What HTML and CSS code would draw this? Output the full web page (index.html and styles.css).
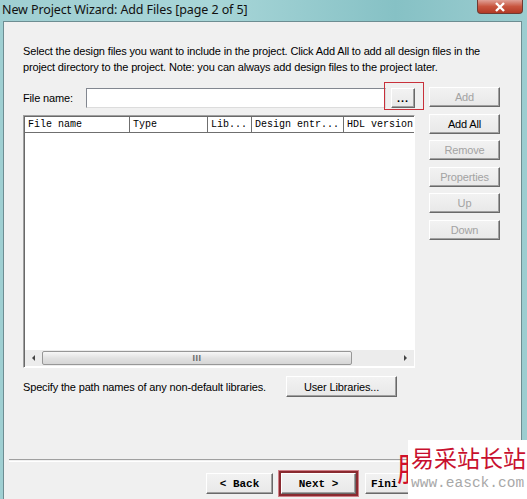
FILE: index.html
```html
<!DOCTYPE html>
<html lang="en">
<head>
<meta charset="UTF-8">
<title>New Project Wizard</title>
<link rel="stylesheet" href="styles.css">
</head>
<body>
<div class="window">
  <div class="titlebar">
    <span class="title">New Project Wizard: Add Files [page 2 of 5]</span>
    <span class="close-btn">
      <svg width="12" height="10" viewBox="0 0 12 10"><path d="M2 1 L10 9 M10 1 L2 9" stroke="#fff" stroke-width="2.4"/></svg>
    </span>
  </div>

  <div class="client">
    <p class="intro">Select the design files you want to include in the project. Click Add All to add all design files in the<br>project directory to the project. Note: you can always add design files to the project later.</p>

    <div class="main">
      <div class="left-column">
        <div class="file-row">
          <label class="file-label">File name:</label>
          <div class="file-input"></div>
          <div class="browse-wrap"><button class="btn browse">...</button></div>
        </div>

        <div class="list">
          <div class="list-head">
            <div class="col col-name">File name</div>
            <div class="col col-type">Type</div>
            <div class="col col-lib">Lib...</div>
            <div class="col col-entry">Design entr...</div>
            <div class="col col-hdl">HDL version</div>
          </div>
          <div class="list-body"></div>
          <div class="hscroll">
            <div class="arrow arrow-left"></div>
            <div class="thumb"><span class="grip">III</span></div>
            <div class="track"></div>
            <div class="arrow arrow-right"></div>
          </div>
        </div>
      </div>

      <div class="side-buttons">
        <button class="btn side disabled">Add</button>
        <button class="btn side">Add All</button>
        <button class="btn side disabled">Remove</button>
        <button class="btn side disabled">Properties</button>
        <button class="btn side disabled">Up</button>
        <button class="btn side disabled">Down</button>
      </div>
    </div>

    <div class="libs-row">
      <span class="libs-text">Specify the path names of any non-default libraries.</span>
      <button class="btn libs-btn">User Libraries...</button>
    </div>

    <div class="separator"></div>

    <div class="nav">
      <button class="btn nav-btn back">&lt; Back</button>
      <div class="next-wrap"><button class="btn nav-btn next">Next &gt;</button></div>
      <button class="btn nav-btn finish">Fini</button>
    </div>
  </div>

  <div class="watermark">
    <span class="wm-cut">腸</span>
    <div class="wm-box">
      <div class="wm-cn">易采站长站</div>
      <div class="wm-url">www.easck.com</div>
    </div>
  </div>
</div>
</body>
</html>
```

FILE: styles.css
```css
body, html {
  margin: 0;
  padding: 0;
  background: #fff;
}
.window {
  position: relative;
  width: 527px;
  height: 499px;
  overflow: hidden;
  background: linear-gradient(to right, #9fcfd2, #a8d6d8 40%, #86c1c5 75%, #9ccdd0);
  font-family: "Liberation Sans", Arial, sans-serif;
  font-size: 11px;
  color: #000;
}
.titlebar {
  height: 21px;
  display: flex;
  justify-content: space-between;
  align-items: flex-start;
}
.title {
  font-family: "Noto Sans", "Liberation Sans", sans-serif;
  font-size: 12.5px;
  line-height: 20px;
  padding-left: 2px;
  color: #111;
  letter-spacing: -0.1px;
}
.close-btn {
  width: 44px;
  height: 13px;
  margin-right: 4px;
  border: 1px solid #6e3a32;
  border-top: none;
  border-radius: 0 0 4px 4px;
  background: linear-gradient(#e0a096, #c8553f 50%, #b33a25);
  display: flex;
  align-items: center;
  justify-content: center;
}
.client {
  position: relative;
  margin-left: 3px;
  margin-right: 5px;
  height: 478px;
  background: #f0f0f0;
  border: 1px solid #6d8d92;
  border-bottom: none;
  letter-spacing: -0.15px;
}
.intro {
  margin: 0;
  padding: 21px 0 0 19px;
  line-height: 16px;
  white-space: nowrap;
}

/* file list + side buttons */
.main {
  display: flex;
  margin-top: 12px;
  margin-left: 19px;
}
.left-column {
  width: 392px;
}
.file-row {
  display: flex;
  align-items: center;
  height: 21px;
}
.file-label {
  width: 63px;
}
.file-input {
  width: 299px;
  height: 18px;
  margin-top: 1px;
  background: #fff;
  border: 1px solid;
  border-color: #828790 #dcdcdc #dcdcdc #828790;
}
.browse-wrap {
  position: relative;
  margin-left: 5px;
  margin-top: 1px;
}
.browse-wrap::after {
  content: "";
  position: absolute;
  left: -7px;
  top: -6px;
  width: 38px;
  height: 26px;
  border: 1px solid #c8303a;
}
.btn {
  font-family: "Liberation Sans", Arial, sans-serif;
  font-size: 11px;
  letter-spacing: -0.15px;
  color: #000;
  background: linear-gradient(#f2f2f2, #e8e8e8);
  border: 1px solid;
  border-color: #fff #696969 #696969 #fff;
  box-shadow: inset -1px -1px #a0a0a0;
  padding: 0;
  height: 20px;
}
.btn.disabled {
  color: #a3a3a3;
}
.browse {
  width: 24px;
  font-weight: bold;
  letter-spacing: 1px;
  line-height: 12px;
}
.list {
  margin-top: 7px;
  height: 250px;
  border: 1px solid;
  border-color: #a0a0a0 #fff #fff #a0a0a0;
  box-shadow: inset 1px 1px #696969;
  background: #fff;
  display: flex;
  flex-direction: column;
  padding: 1px 0 0 1px;
  letter-spacing: 0;
}
.list-head {
  display: flex;
  height: 15px;
  font-family: "Liberation Mono", "Courier New", monospace;
  font-size: 10px;
  line-height: 15px;
  border-bottom: 1px solid #6f6f6f;
}
.col {
  border-right: 1px solid #6f6f6f;
  padding-left: 3px;
  box-sizing: border-box;
  white-space: nowrap;
  overflow: hidden;
}
.col-name { width: 105px; }
.col-type { width: 78px; }
.col-lib { width: 44px; }
.col-entry { width: 92px; }
.col-hdl { flex: 1; border-right: none; }
.list-body {
  flex: 1;
}
.hscroll {
  height: 16px;
  display: flex;
  align-items: stretch;
  background: #ececec;
  margin-bottom: 1px;
}
.arrow {
  width: 17px;
  display: flex;
  align-items: center;
  justify-content: center;
}
.arrow-left::before {
  content: "";
  border-right: 3px solid #444;
  border-top: 3px solid transparent;
  border-bottom: 3px solid transparent;
}
.arrow-right::before {
  content: "";
  border-left: 3px solid #444;
  border-top: 3px solid transparent;
  border-bottom: 3px solid transparent;
}
.thumb {
  width: 308px;
  margin: 1px 0;
  border: 1px solid #979797;
  border-radius: 2px;
  background: linear-gradient(#f7f7f7, #e2e2e2 50%, #d6d6d6);
  display: flex;
  align-items: center;
  justify-content: center;
}
.grip {
  font-size: 9px;
  font-weight: bold;
  color: #6a6a6a;
  letter-spacing: 0.5px;
}
.track {
  flex: 1;
}
.side-buttons {
  margin-left: 14px;
  display: flex;
  flex-direction: column;
  gap: 6.6px;
}
.btn.side {
  width: 71px;
}

/* libraries row */
.libs-row {
  display: flex;
  align-items: center;
  margin: 8px 0 0 19px;
  height: 21px;
}
.libs-text {
  width: 263px;
}
.libs-btn {
  width: 111px;
  height: 21px;
}
.separator {
  margin: 62px 0 0 5px;
  height: 1px;
  border-top: 1px solid #a0a0a0;
  border-bottom: 1px solid #fff;
}

/* wizard navigation */
.nav {
  display: flex;
  margin: 11px 0 0 202px;
}
.nav-btn {
  font-family: "Liberation Mono", "Courier New", monospace;
  font-size: 11px;
  font-weight: bold;
  letter-spacing: 0;
  height: 21px;
}
.back {
  width: 67px;
}
.next-wrap {
  position: relative;
  margin-left: 8px;
}
.next-wrap::after {
  content: "";
  position: absolute;
  left: -2px;
  top: -2px;
  right: -2px;
  bottom: -2px;
  border: 2px solid #8a2a30;
  box-shadow: 0 0 0 1px #d08088;
}
.next {
  width: 75px;
}
.finish {
  width: 75px;
  margin-left: 9px;
  text-align: left;
  padding-left: 5px;
}

/* site watermark laid over the corner */
.watermark {
  position: absolute;
  left: 397px;
  top: 440px;
  display: flex;
}
.wm-cut {
  width: 11px;
  overflow: hidden;
  font-family: "Noto Sans CJK SC", sans-serif;
  font-size: 32px;
  line-height: 54px;
  color: #d0102a;
}
.wm-box {
  width: 120px;
  height: 59px;
  background: #fff;
  padding-left: 3px;
}
.wm-cn {
  font-family: "Noto Sans CJK SC", sans-serif;
  font-size: 23px;
  line-height: 34px;
  color: #c8102e;
  white-space: nowrap;
}
.wm-url {
  font-family: "Liberation Mono", monospace;
  font-size: 14.5px;
  line-height: 18px;
  color: #a8a8a8;
  white-space: nowrap;
}
```
